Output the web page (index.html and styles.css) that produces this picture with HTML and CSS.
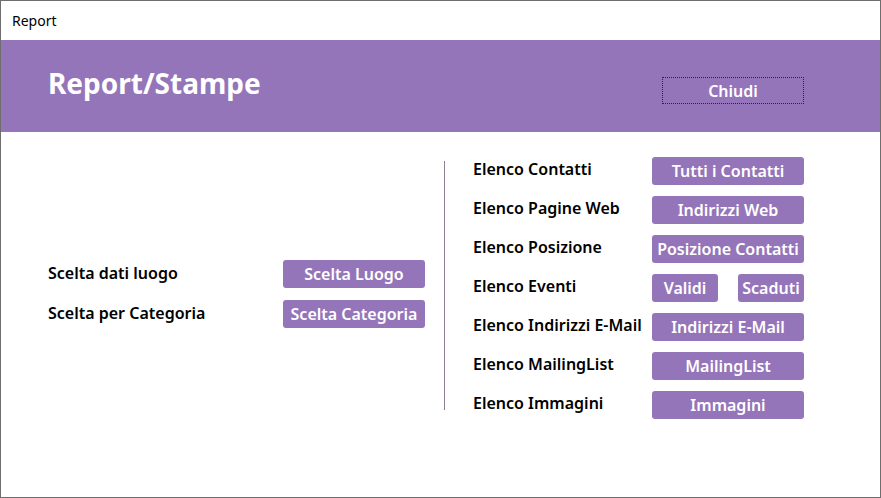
FILE: index.html
```html
<!DOCTYPE html>
<html>
<head>
<meta charset="utf-8">
<link rel="stylesheet" href="styles.css">
</head>
<body>
<div class="window">
  <div class="titlebar">Report</div>
  <div class="header">
    <h1 class="title">Report/Stampe</h1>
    <button class="close">Chiudi</button>
  </div>
  <div class="content">
    <div class="left">
      <div class="row"><span class="label">Scelta dati luogo</span><button class="btn wide">Scelta Luogo</button></div>
      <div class="row"><span class="label">Scelta per Categoria</span><button class="btn wide">Scelta Categoria</button></div>
    </div>
    <div class="divider"></div>
    <div class="right">
      <div class="row"><span class="label">Elenco Contatti</span><button class="btn wide">Tutti i Contatti</button></div>
      <div class="row"><span class="label">Elenco Pagine Web</span><button class="btn wide">Indirizzi Web</button></div>
      <div class="row"><span class="label">Elenco Posizione</span><button class="btn wide">Posizione Contatti</button></div>
      <div class="row"><span class="label">Elenco Eventi</span><div class="pair"><button class="btn small">Validi</button><button class="btn small">Scaduti</button></div></div>
      <div class="row"><span class="label">Elenco Indirizzi E-Mail</span><button class="btn wide">Indirizzi E-Mail</button></div>
      <div class="row"><span class="label">Elenco MailingList</span><button class="btn wide">MailingList</button></div>
      <div class="row"><span class="label">Elenco Immagini</span><button class="btn wide">Immagini</button></div>
    </div>
  </div>
</div>
</body>
</html>
```
FILE: styles.css
```css
* { box-sizing: border-box; }
html, body { margin: 0; padding: 0; background: #fff; }
body { font-family: "Noto Sans", "Open Sans", sans-serif; }
.window {
  width: 881px;
  height: 498px;
  border: 1px solid #6e6e6e;
  display: flex;
  flex-direction: column;
  background: #fff;
}
.titlebar {
  height: 39px;
  padding-left: 11px;
  font-size: 14px;
  line-height: 39px;
  color: #000;
}
.header {
  height: 92px;
  background: #9575ba;
  display: flex;
  align-items: flex-start;
  justify-content: space-between;
  padding: 0 76px 0 47px;
}
.title {
  margin: 0;
  padding-top: 23px;
  font-size: 28px;
  line-height: 40px;
  font-weight: 700;
  color: #fff;
}
.close {
  margin-top: 37px;
  width: 142px;
  height: 27px;
  background: transparent;
  border: 1px dotted #2a2240;
  color: #fff;
  font-family: inherit;
  font-size: 16px;
  font-weight: 600;
  padding: 0;
  line-height: 24px;
}
.content {
  flex: 1;
  display: flex;
  align-items: flex-start;
}
.left {
  margin-left: 47px;
  padding-top: 128px;
  width: 377px;
  display: flex;
  flex-direction: column;
  gap: 12px;
}
.left .row {
  justify-content: space-between;
}
.row {
  display: flex;
  align-items: center;
  height: 28px;
}
.label {
  font-size: 16px;
  font-weight: 600;
  color: #000;
  margin-top: -4px;
}
.left .label { margin-top: -2px; }
.divider {
  margin-left: 19px;
  margin-top: 29px;
  width: 1px;
  height: 249px;
  background: #8c7f98;
}
.right {
  margin-left: 28px;
  padding-top: 25px;
  width: 331px;
  display: flex;
  flex-direction: column;
  gap: 11px;
}
.right .row {
  justify-content: space-between;
}
.btn {
  height: 28px;
  background: #9575ba;
  border: none;
  border-radius: 3px;
  color: #fff;
  font-family: inherit;
  font-size: 16px;
  font-weight: 600;
  padding: 0;
  line-height: 28px;
  white-space: nowrap;
}
.wide { width: 142px; }
.right .wide { width: 152px; }
.pair {
  width: 152px;
  display: flex;
  justify-content: space-between;
}
.small { width: 66px; }
```
